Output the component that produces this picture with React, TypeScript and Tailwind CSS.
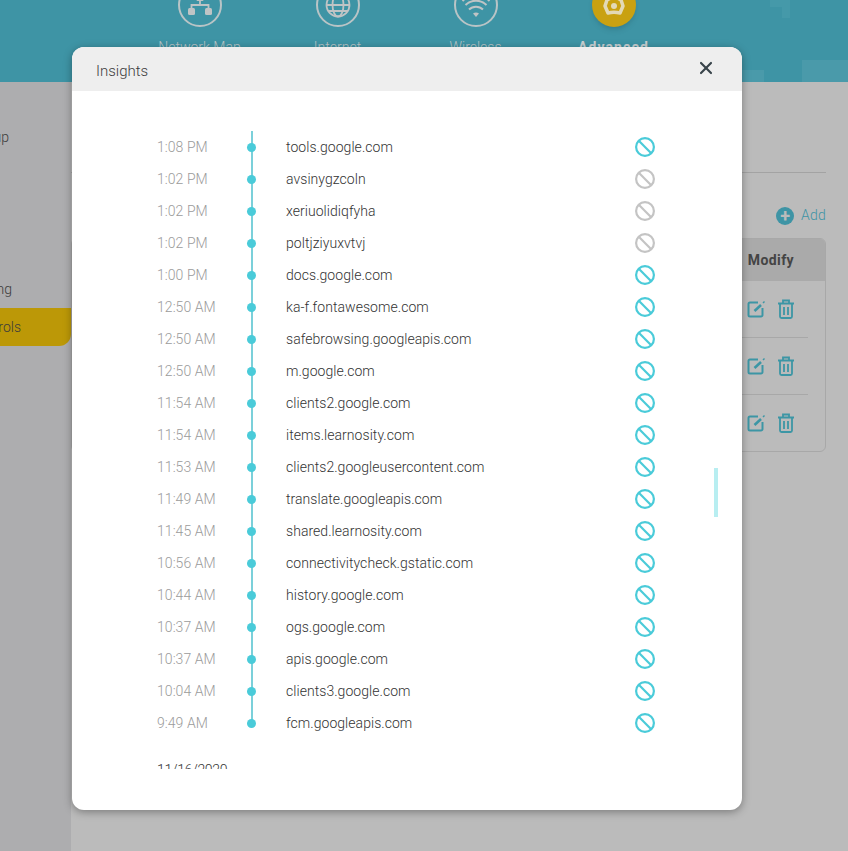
import { X } from "lucide-react";

const rows = [
  { time: "1:08 PM", host: "tools.google.com", on: true },
  { time: "1:02 PM", host: "avsinygzcoln", on: false },
  { time: "1:02 PM", host: "xeriuolidiqfyha", on: false },
  { time: "1:02 PM", host: "poltjziyuxvtvj", on: false },
  { time: "1:00 PM", host: "docs.google.com", on: true },
  { time: "12:50 AM", host: "ka-f.fontawesome.com", on: true },
  { time: "12:50 AM", host: "safebrowsing.googleapis.com", on: true },
  { time: "12:50 AM", host: "m.google.com", on: true },
  { time: "11:54 AM", host: "clients2.google.com", on: true },
  { time: "11:54 AM", host: "items.learnosity.com", on: true },
  { time: "11:53 AM", host: "clients2.googleusercontent.com", on: true },
  { time: "11:49 AM", host: "translate.googleapis.com", on: true },
  { time: "11:45 AM", host: "shared.learnosity.com", on: true },
  { time: "10:56 AM", host: "connectivitycheck.gstatic.com", on: true },
  { time: "10:44 AM", host: "history.google.com", on: true },
  { time: "10:37 AM", host: "ogs.google.com", on: true },
  { time: "10:37 AM", host: "apis.google.com", on: true },
  { time: "10:04 AM", host: "clients3.google.com", on: true },
  { time: "9:49 AM", host: "fcm.googleapis.com", on: true },
];

const BlockIcon = ({ on }: { on: boolean }) => (
  <svg width="20" height="20" viewBox="0 0 20 20" fill="none" stroke={on ? "#4acbd9" : "#c4c4c4"} strokeWidth="2.2">
    <circle cx="10" cy="10" r="8.9" />
    <path d="M3.8 3.8 16.2 16.2" />
  </svg>
);

const EditIcon = () => (
  <svg width="20" height="20" viewBox="0 0 20 20" fill="none" stroke="#3c96a5" strokeWidth="2">
    <path d="M11 3.500H3a1.500 1.500 0 0 0-1.500 1.500v11A1.500 1.500 0 0 0 3 17.500h11a1.500 1.500 0 0 0 1.500-1.500V9" />
    <path d="M7.500 12 14 6" strokeWidth="2.600" />
    <path d="M16 4l1.500-1.500" strokeWidth="1.400" />
  </svg>
);

const TrashIcon = () => (
  <svg width="18" height="20" viewBox="0 0 18 20" fill="none" stroke="#3c96a5" strokeWidth="1.800">
    <path d="M1 4.500h16M6 4V1.500h6V4" />
    <path d="M3 5v12.500A1.500 1.500 0 0 0 4.500 19h9a1.500 1.500 0 0 0 1.500-1.500V5" />
    <path d="M7 8v8M11 8v8" />
  </svg>
);

const NetworkGlyph = () => (
  <svg width="24" height="20" viewBox="0 0 24 20" fill="#bfc4c5">
    <rect x="8.500" y="0" width="7" height="6" rx="1" />
    <path d="M12 6v4M3.500 14v-4h17v4" fill="none" stroke="#bfc4c5" strokeWidth="1.800" />
    <rect x="0" y="13" width="7" height="7" rx="1.500" />
    <rect x="17" y="13" width="7" height="7" rx="1.500" />
  </svg>
);

const GlobeGlyph = () => (
  <svg width="28" height="28" viewBox="0 0 28 28" fill="none" stroke="#bfc4c5" strokeWidth="1.800">
    <circle cx="14" cy="14" r="11.500" />
    <ellipse cx="14" cy="14" rx="5.500" ry="11.500" />
    <path d="M2.500 14h23M4 8h20M4 20h20" />
  </svg>
);

const WifiGlyph = () => (
  <svg width="30" height="24" viewBox="0 0 30 24" fill="none" stroke="#bfc4c5" strokeWidth="2">
    <path d="M1.500 8a19 19 0 0 1 27 0M4.500 12a15 15 0 0 1 21 0M8 16.500a10 10 0 0 1 14 0" />
    <path d="M12 20.500q3-2 6 0L15 24z" fill="#bfc4c5" stroke="none" />
  </svg>
);

const GearGlyph = () => (
  <svg width="24" height="24" viewBox="0 0 24 24" fill="none" stroke="#e3d9b6" strokeWidth="3.500">
    <path d="M12 3 19 7l2 6-3 7q-6-1.500-12 0L3 13l2-6z" strokeLinejoin="round" />
    <circle cx="12" cy="13" r="3" fill="#e3d9b6" stroke="none" />
  </svg>
);

const navItems = [
  { label: "Network Map", glyph: <NetworkGlyph />, active: false },
  { label: "Internet", glyph: <GlobeGlyph />, active: false },
  { label: "Wireless", glyph: <WifiGlyph />, active: false },
  { label: "Advanced", glyph: <GearGlyph />, active: true },
];

const App = () => {
  return (
    <div className="relative h-[851px] w-[848px] overflow-hidden bg-[#bbbbbb] font-['Roboto',sans-serif] font-light">
      {/* top bar, mostly behind the dialog */}
      <header className="relative flex h-[82px] justify-center overflow-hidden bg-[#3e94a5]">
        <div className="absolute right-[58px] top-0 h-[18px] w-[8px] bg-[#4599a9]" />
        <div className="absolute right-[58px] top-0 h-[7px] w-[20px] bg-[#4599a9]" />
        <div className="absolute right-0 top-[60px] h-[22px] w-[46px] bg-[#4a9aaa]" />
        <div className="absolute right-[84px] top-[70px] h-[12px] w-[22px] bg-[#4a9aaa]" />
        <nav className="-mt-[17px] ml-[-35px] flex">
          {navItems.map((item) => (
            <div key={item.label} className="flex w-[138px] flex-col items-center">
              <div
                className={
                  item.active
                    ? "flex h-[44px] w-[44px] items-center justify-center rounded-full bg-[#c9a111] shadow-md"
                    : "flex h-[44px] w-[44px] items-center justify-center rounded-full border-2 border-[#b9c4c6]"
                }
              >
                {item.glyph}
              </div>
              <span
                className={
                  item.active
                    ? "mt-[10px] whitespace-nowrap text-[14px] font-bold tracking-[1.1px] text-[#c7cfd1]"
                    : "mt-[10px] whitespace-nowrap text-[14px] text-[#b9c4c6]"
                }
              >
                {item.label}
              </span>
            </div>
          ))}
        </nav>
      </header>

      <div className="flex h-[769px]">
        <aside className="flex w-[71px] flex-col overflow-hidden whitespace-nowrap bg-[#adadaf] text-[14px] text-[#3c3c3c]">
          <div className="mt-[36px] flex h-[38px] items-center justify-end pr-[62px]">Setup</div>
          <div className="mt-[114px] flex h-[38px] items-center justify-end pr-[59px]">Website Filtering</div>
          <div className="flex h-[38px] items-center justify-end rounded-br-xl bg-[#bc9807] pr-[50px]">
            Parental Controls
          </div>
        </aside>

        <main className="flex-1 pr-[22px]">
          <div className="mt-[90px] h-px bg-[#a3a3a3]" />
          <div className="mt-[32px] flex items-center justify-end gap-[7px] text-[14px] text-[#3e94a5]">
            <span className="flex h-[18px] w-[18px] items-center justify-center rounded-full bg-[#3e94a5] text-[18px] font-bold leading-none text-[#bbbbbb]">
              +
            </span>
            <span className="tracking-[0.2px]">Add</span>
          </div>
          <div className="mt-[12px] h-[214px] overflow-hidden rounded-md border border-[#a8a8a8] font-normal">
            <div className="flex h-[42px] items-center justify-end bg-[#aaaaaa] pr-[31px] text-[14px] font-bold tracking-[0.4px] text-[#444]">
              Modify
            </div>
            {[0, 1, 2].map((i) => (
              <div key={i} className="mr-[17px] flex h-[57px] items-center justify-end gap-[10px] border-b border-[#a8a8a8] pr-[13px] last:border-b-transparent">
                <EditIcon />
                <TrashIcon />
              </div>
            ))}
          </div>
        </main>
      </div>

      {/* dialog */}
      <div className="absolute left-[72px] top-[47px] flex h-[763px] w-[670px] flex-col overflow-hidden rounded-xl bg-white shadow-[0_2px_8px_rgba(0,0,0,0.35)]">
        <div className="flex h-[44px] shrink-0 items-center justify-between bg-[#eeeeee] pl-[24px] pr-[26px]">
          <span className="mt-[4px] text-[15px] text-[#3c3c3c]">Insights</span>
          <X size={20} strokeWidth={2.6} color="#39444a" className="-mt-[2px]" />
        </div>
        <div className="h-[678px] overflow-hidden pl-[85px] pt-[40px]">
          {rows.map((row, i) => (
            <div key={i} className="flex h-[32px] items-center">
              <span className="w-[90px] text-[14px] tracking-[0.05px] text-[#9b9b9b]">{row.time}</span>
              <span className="relative flex h-full w-[10px] items-center">
                <span
                  className={
                    i === rows.length - 1
                      ? "absolute left-[4px] top-0 h-1/2 w-[2px] bg-[#7bd0da]"
                      : "absolute left-[4px] top-0 h-full w-[2px] bg-[#7bd0da]"
                  }
                />
                <span className="relative h-[9px] w-[9px] rounded-full bg-[#4acbd9]" />
              </span>
              <span className="ml-[29px] w-[349px] text-[14px] tracking-[0.05px] text-[#333]">{row.host}</span>
              <BlockIcon on={row.on} />
            </div>
          ))}
          <div className="mt-[21px] text-[14px] tracking-[-0.3px] text-[#333]">11/16/2020</div>
        </div>
        <div className="absolute left-[642px] top-[421px] h-[49px] w-[4px] bg-[#b8eef1]" />
      </div>
    </div>
  );
};

export default App;
